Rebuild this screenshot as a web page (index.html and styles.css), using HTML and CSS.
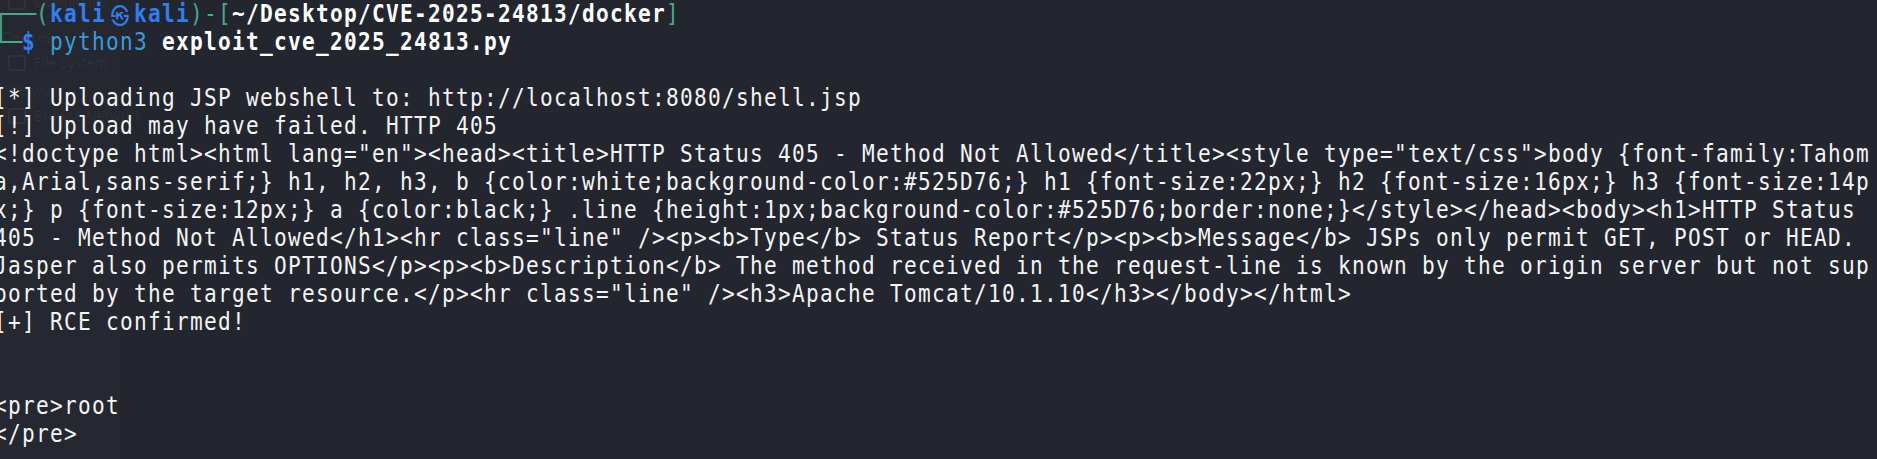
FILE: index.html
```html
<!DOCTYPE html>
<html lang="en">
<head>
<meta charset="utf-8">
<title>Terminal</title>
<link rel="stylesheet" href="styles.css">
</head>
<body>
<div class="window">
  <div class="ghost" aria-hidden="true">
    <div class="ghost-side"></div>
    <div class="ghost-item g-top"><span class="g-icon"></span><span>Downloads</span></div>
    <div class="ghost-item g-dev"><span>Devices</span></div>
    <div class="ghost-item g-fs"><span class="g-icon"></span><span>File System</span></div>
    <div class="ghost-item g-net"><span>Network</span></div>
    <div class="ghost-item g-bn"><span class="g-icon"></span><span>Browse Network</span></div>
  </div>
  <div class="term">
    <div class="line"><span class="g box box3">┌──</span><span class="g">(</span><span class="b">kali<span class="sym">㉿</span>kali</span><span class="g">)-[</span><span class="w">~/Desktop/CVE-2025-24813/docker</span><span class="g">]</span></div>
    <div class="line"><span class="g box box2">└─</span><span class="b">$</span> <span class="cmd">python3</span> <span class="w">exploit_cve_2025_24813.py</span></div>
    <div class="line"> </div>
    <div class="line">[*] Uploading JSP webshell to: http://localhost:8080/shell.jsp</div>
    <div class="line">[!] Upload may have failed. HTTP 405</div>
    <div class="line">&lt;!doctype html&gt;&lt;html lang="en"&gt;&lt;head&gt;&lt;title&gt;HTTP Status 405 - Method Not Allowed&lt;/title&gt;&lt;style type="text/css"&gt;body {font-family:Tahom</div>
    <div class="line">a,Arial,sans-serif;} h1, h2, h3, b {color:white;background-color:#525D76;} h1 {font-size:22px;} h2 {font-size:16px;} h3 {font-size:14p</div>
    <div class="line">x;} p {font-size:12px;} a {color:black;} .line {height:1px;background-color:#525D76;border:none;}&lt;/style&gt;&lt;/head&gt;&lt;body&gt;&lt;h1&gt;HTTP Status </div>
    <div class="line">405 - Method Not Allowed&lt;/h1&gt;&lt;hr class="line" /&gt;&lt;p&gt;&lt;b&gt;Type&lt;/b&gt; Status Report&lt;/p&gt;&lt;p&gt;&lt;b&gt;Message&lt;/b&gt; JSPs only permit GET, POST or HEAD. </div>
    <div class="line">Jasper also permits OPTIONS&lt;/p&gt;&lt;p&gt;&lt;b&gt;Description&lt;/b&gt; The method received in the request-line is known by the origin server but not sup</div>
    <div class="line">ported by the target resource.&lt;/p&gt;&lt;hr class="line" /&gt;&lt;h3&gt;Apache Tomcat/10.1.10&lt;/h3&gt;&lt;/body&gt;&lt;/html&gt;</div>
    <div class="line">[+] RCE confirmed!</div>
    <div class="line"> </div>
    <div class="line"> </div>
    <div class="line">&lt;pre&gt;root</div>
    <div class="line">&lt;/pre&gt;</div>
  </div>
</div>
</body>
</html>
```

FILE: styles.css
```css
html, body {
  margin: 0;
  padding: 0;
  background: #23262e;
  overflow: hidden;
}

.window {
  position: relative;
  width: 1877px;
  height: 459px;
  overflow: hidden;
  background: #23262e;
}

.ghost {
  position: absolute;
  inset: 0;
  z-index: 0;
  font-family: "Noto Sans", "DejaVu Sans", sans-serif;
  font-size: 14px;
  color: rgba(255, 255, 255, 0.06);
}

.ghost-side {
  position: absolute;
  left: 0;
  top: 0;
  width: 120px;
  height: 459px;
  background: rgba(255, 255, 255, 0.012);
}

.ghost-item {
  position: absolute;
  display: flex;
  align-items: center;
  gap: 8px;
  white-space: nowrap;
}

.g-icon {
  display: inline-block;
  width: 14px;
  height: 12px;
  border: 2px solid rgba(255, 255, 255, 0.05);
  border-radius: 2px;
}

.g-top { left: 8px; top: -8px; }
.g-dev { left: 2px; top: 27px; }
.g-fs { left: 8px; top: 53px; }
.g-net { left: 8px; top: 80px; }
.g-bn { left: 8px; top: 106px; }

.term {
  position: relative;
  z-index: 1;
  margin-left: -6px;
  font-family: "DejaVu Sans Mono", monospace;
  font-size: 24px;
  line-height: 28px;
  letter-spacing: 1.46px;
  color: #f4f4f4;
}

.line {
  white-space: pre;
  height: 28px;
  transform: scaleX(0.88);
  transform-origin: 0 0;
}

.g { color: #47a88e; }
.b { color: #2f7ff0; font-weight: bold; }
.w { color: #ffffff; font-weight: bold; }
.cmd { color: #3a9bdc; }

.box {
  display: inline-block;
  letter-spacing: 0;
  transform: scaleX(1.101);
  transform-origin: 0 0;
}

.box3 { margin-right: 4.38px; }
.box2 { margin-right: 2.92px; }

.sym {
  display: inline-block;
  width: 31.8px;
  letter-spacing: 0;
  text-align: center;
  font-family: "Noto Sans CJK KR", "DejaVu Sans", sans-serif;
  font-size: 21px;
  font-weight: bold;
  vertical-align: top;
}
```
